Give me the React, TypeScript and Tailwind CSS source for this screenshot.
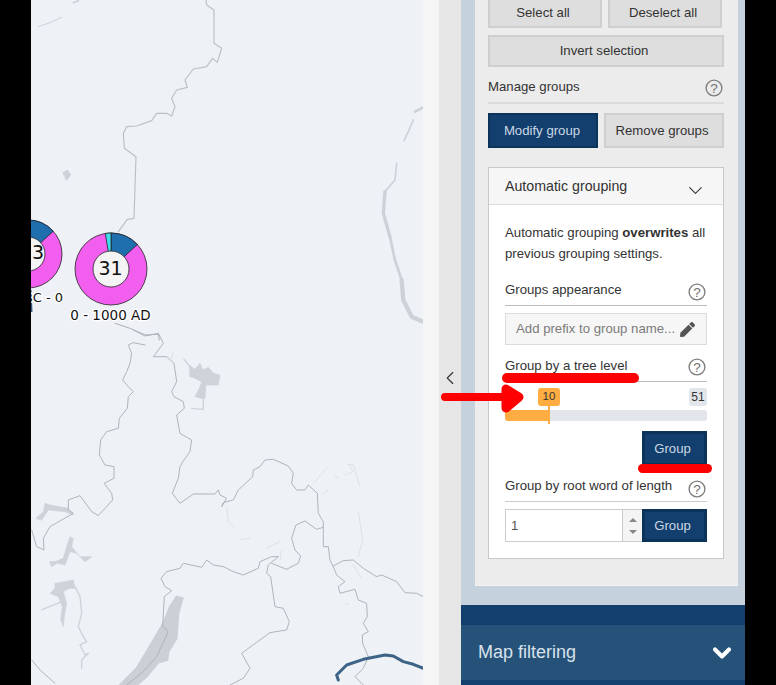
import React from "react";
import { ChevronDown, ChevronLeft } from "lucide-react";
import { FaPen } from "react-icons/fa";

// map lines are in 3x coordinates, the group below scales them down
const borders = [
  "M310,0 L345,18 L385,10 L400,40 L385,60 L370,80 L410,80 L432,100 L440,155 L425,185 L432,200 L460,215 L463,235 L440,255 L447,295 L450,310 L485,330 L480,365 L462,390 L450,410 L445,445 L427,490 L450,520 L490,492 L555,492 L565,480 L570,495 L590,505 L575,530 L580,518 L610,510 L625,480 L668,440 L670,420 L690,410 L705,390 L730,388 L775,408 L790,430 L785,460 L800,480 L825,480 L835,465 L862,490 L865,550 L880,575 L880,650 L895,650 L900,690 L912,715 L920,735 L945,755 L925,770 L930,790 L975,778 L985,810 L1010,820 L1012,860 L1000,880 L1015,905 L997,915 L998,940 L1015,980",
  "M345,45 L310,38 L295,45 L305,70 L300,100 L290,125 L278,150 L295,170 L310,185 L295,200 L292,235 L268,265 L265,295 L230,305 L212,330 L208,375 L225,405 L252,410 L252,445 L222,460 L245,490 L248,510 L225,535 L205,557 L185,545 L150,497 L115,510 L115,540 L130,550 L60,590 L40,625 L42,660 L20,650 L5,600",
  "M745,680 L725,680 L690,695 L685,715 L640,735 L610,725 L580,710 L550,705 L530,690 L515,712 L460,700 L450,715 L410,725 L393,745 L405,770 L425,782 L403,800 L398,890 L415,905 L380,980 L340,1025 L290,1065",
  "M725,700 L770,718 L805,700 L812,678 L795,660 L785,625 L798,585 L825,573 L860,598 L880,592",
  "M745,680 L715,705 L710,730 L722,740 L735,830 L760,835 L778,875 L770,900 L720,908 L635,970 L660,1015 L640,1045 L600,1065",
  "M910,708 L940,692 L970,690 L1000,715 L1040,740 L1055,735 L1100,755 L1125,788 L1160,790 L1180,800",
  "M5,990 L30,1020 L75,1060",
  "M1015,980 L1000,1015 L975,1040 L1000,1065",
];

const lakes = [
  "M478,105 L495,118 L510,100 L518,120 L535,112 L550,130 L570,135 L565,165 L545,165 L528,165 L525,205 L512,205 L495,200 L508,175 L515,155 L495,145 L480,140 Z",
  "M75,760 L105,755 L130,750 L135,775 L118,775 L100,785 L110,820 L103,860 L100,890 L92,870 L97,830 L85,800 L60,790 L75,775 Z",
  "M18,565 L40,545 L45,520 L60,525 L115,535 L130,555 L105,545 L55,540 L35,570 Z",
  "M60,695 L75,695 L100,685 L110,650 L120,620 L130,625 L125,650 L150,680 L185,680 L165,695 L140,670 L120,665 L105,705 L80,700 L65,710 Z",
];

const thinRivers = [
  "M520,205 L520,238 L485,235",
  "M462,88 L480,110",
  "M35,840 L95,815",
  "M135,770 L150,800 L155,850 L145,890 L160,920 L170,935 L150,945 L165,975 L175,970 L155,990 L155,1015",
];

const faintRivers = [
  "M430,65 L425,85",
  "M590,530 L595,575 L615,595",
  "M632,628 L660,625",
  "M710,655 L750,635",
  "M755,660 L750,690",
  "M850,460 L890,415",
  "M880,490 L895,480",
  "M915,435 L925,445",
  "M945,435 L970,425 L955,403 L970,405 L990,470",
  "M985,545 L998,630 L985,680",
  "M970,705 L995,745",
  "M945,825 L955,820",
];

const upperRivers: [number, string][] = [
  [3, "M25,80 L60,68 L95,52"],
  [5, "M130,8 L145,2"],
  [8, "M1155,335 L1180,322"],
  [5, "M1150,360 L1135,395 L1122,422"],
  [5, "M1100,490 L1095,540 L1065,575"],
  [10, "M1065,575 L1060,640 L1080,710"],
  [8, "M1080,710 L1095,780 L1115,840"],
  [13, "M1115,840 L1120,900 L1145,950 L1180,965"],
];

const HelpIcon = () => (
  <svg viewBox="0 0 18 18" className="h-[18px] w-[18px] shrink-0">
    <circle cx="9" cy="9" r="7.9" fill="none" stroke="#808080" strokeWidth="1.4" />
    <text x="9" y="13.6" textAnchor="middle" fontSize="13.5" fontFamily="Liberation Sans" fill="#707070">
      ?
    </text>
  </svg>
);

const SectionTitle = ({ label, className }: { label: string; className: string }) => (
  <div className={`flex items-end justify-between ${className}`}>
    <span>{label}</span>
    <HelpIcon />
  </div>
);

const polar = (cx: number, cy: number, r: number, deg: number) => {
  const a = ((deg - 90) * Math.PI) / 180;
  return `${cx + r * Math.cos(a)},${cy + r * Math.sin(a)}`;
};

const slice = (cx: number, cy: number, r: number, from: number, to: number, fill: string) => (
  <path
    d={`M${cx},${cy} L${polar(cx, cy, r, from)} A${r},${r} 0 ${to - from > 180 ? 1 : 0} 1 ${polar(cx, cy, r, to)} Z`}
    fill={fill}
    stroke="#222"
    strokeWidth="0.8"
  />
);

const MapView = () => (
  <svg viewBox="31 0 392 685" className="h-full w-[392px] bg-[#eef1f6]">
    <g transform="translate(30,330) scale(0.3333)" fill="none" strokeLinejoin="round" strokeLinecap="round">
      {lakes.map((d) => (
        <path key={d} d={d} fill="#ced3d9" stroke="#ced3d9" strokeWidth="2" />
      ))}
      {thinRivers.map((d) => (
        <path key={d} d={d} stroke="#ced3d9" strokeWidth="4" />
      ))}
      {faintRivers.map((d) => (
        <path key={d} d={d} stroke="#dde1e6" strokeWidth="3" />
      ))}
      <path
        d="M440,800 L458,805 L445,850 L440,925 L415,965 L412,990 L385,998 L350,1040 L320,1065 L270,1065 L320,1015 L350,965 L400,880 L420,830 Z"
        fill="#ccd0d6"
        stroke="#ccd0d6"
        strokeWidth="6"
      />
      {borders.map((d) => (
        <path key={d} d={d} stroke="#aab0b6" strokeWidth="2.8" />
      ))}
      <path
        d="M925,1050 L920,1035 L950,1005 L1000,988 L1065,975 L1090,978 L1120,995 L1150,1003 L1180,1015"
        stroke="#3d6486"
        strokeWidth="9"
      />
    </g>
    <g transform="translate(30,0) scale(0.3333)" fill="none" strokeLinejoin="round" strokeLinecap="round">
      <path
        d="M528,0 L530,15 L552,30 L552,130 L575,145 L562,187 L548,175 L530,200 L490,207 L465,240 L472,262 L440,270 L425,295 L435,320 L425,348 L410,340 L380,340 L365,362 L320,378 L290,380 L280,400 L283,445 L318,470 L312,655 L292,658 L265,695"
        stroke="#bcc0c5"
        strokeWidth="3.5"
      />
      {upperRivers.map(([w, d]) => (
        <path key={d} d={d} stroke="#cdd2d8" strokeWidth={w} />
      ))}
      <path d="M100,518 L112,510 L122,525 L110,540 Z" fill="#cdd2d8" stroke="#cdd2d8" strokeWidth="3" />
      <path d="M255,970 L300,985 L345,1005 L385,1003 L388,1020" stroke="#aab0b6" strokeWidth="3" />
    </g>

    {/* second pie, cut by the black edge */}
    <path d="M30,290 L31,312" stroke="#2c5b84" strokeWidth="3" />
    <circle cx="28" cy="254" r="34" fill="#f25fee" stroke="#222" strokeWidth="0.8" />
    {slice(28, 254, 34, 0, 48, "#1f6fae")}
    <circle cx="28" cy="254" r="17" fill="#f4f4f4" stroke="#222" strokeWidth="0.8" />
    <text x="38" y="259" textAnchor="middle" fontSize="19" fontFamily="DejaVu Sans" fill="#111">
      3
    </text>
    <text
      x="63"
      y="302"
      textAnchor="end"
      fontSize="13"
      fontFamily="DejaVu Sans"
      fill="#111"
      stroke="#fff"
      strokeWidth="2.5"
      paintOrder="stroke"
    >
      BC - 0
    </text>

    {/* main pie */}
    <circle cx="111" cy="269" r="36" fill="#f25fee" stroke="#222" strokeWidth="0.8" />
    {slice(111, 269, 36, 0, 47, "#1f6fae")}
    {slice(111, 269, 36, -9, 0, "#3fdfee")}
    <circle cx="111" cy="269" r="18" fill="#f4f4f4" stroke="#222" strokeWidth="0.8" />
    <text x="110.5" y="275" textAnchor="middle" fontSize="19" fontFamily="DejaVu Sans" fill="#111">
      31
    </text>
    <text
      x="110.5"
      y="320"
      textAnchor="middle"
      fontSize="13.5"
      fontFamily="DejaVu Sans"
      fill="#111"
      stroke="#fff"
      strokeWidth="2.5"
      paintOrder="stroke"
    >
      0 - 1000 AD
    </text>
  </svg>
);

const GroupButton = ({ className }: { className: string }) => (
  <button className={`bg-[#123f6d] border-[3px] border-[#0c3359] pr-[4px] text-[13.2px] text-[#ccd8e4] ${className}`}>
    Group
  </button>
);

const grayBtn = "bg-[#dedede] border-2 border-[#cfcfcf] pr-[4px] text-[13.2px] text-[#333] flex items-center justify-center";

const Panel = () => (
  <div className="flex h-full w-[284px] flex-col bg-[#c5d1dd]">
    <div className="mx-[14px] h-[586px] w-[263px] border-b border-[#f4f4f4] bg-[#ececec] pl-[13px] text-[13.2px] text-[#333]">
      <div className="flex w-[234px] gap-[6px]">
        <div className={`h-[28px] w-[114px] border-t-0 ${grayBtn}`}>Select all</div>
        <div className={`h-[28px] w-[114px] border-t-0 ${grayBtn}`}>Deselect all</div>
      </div>
      <div className={`mt-[7px] h-[32px] w-[236px] ${grayBtn}`}>Invert selection</div>

      <SectionTitle label="Manage groups" className="mt-[12px] h-[22px] w-[236px] pr-[1px] leading-[18px] [&>span]:mb-[5px] [&>svg]:mb-[4px]" />
      <div className="mt-[1px] h-[2px] w-[236px] bg-[#dcdcdc]" />
      <div className="mt-[9px] flex w-[236px] gap-[6px]">
        <button className="h-[35px] w-[110px] border-2 border-[#0c3359] bg-[#123f6d] pr-[2px] text-[13.2px] text-[#ccd8e4]">
          Modify group
        </button>
        <div className={`h-[35px] w-[120px] ${grayBtn}`}>Remove groups</div>
      </div>

      {/* Automatic grouping card */}
      <div className="mt-[19px] h-[392px] w-[236px] border border-[#c8c8c8] bg-white">
        <div className="flex h-[37px] items-center justify-between border-b border-[#dcdcdc] bg-[#f6f6f6] pr-[16px] pl-[16px] text-[14.2px]">
          <span className="pt-[2px]">Automatic grouping</span>
          <ChevronDown size={23} strokeWidth={1.1} className="mt-[8px] text-[#333]" />
        </div>
        <div className="px-[16px]">
          <p className="mt-[17px] leading-[21px]">
            Automatic grouping <b>overwrites</b> all previous grouping settings.
          </p>

          <SectionTitle label="Groups appearance" className="mt-[20px] h-[22px] border-b border-[#bbb] pr-[1px] [&>span]:mb-[5px] [&>svg]:mb-[4px]" />
          <div className="mt-[7px] flex h-[32px] items-center justify-between border border-[#dcdcdc] bg-[#f6f6f6] pr-[11px] pl-[10px] text-[#7b7b7b]">
            <span>Add prefix to group name...</span>
            <FaPen size={15} className="text-[#555]" />
          </div>

          <SectionTitle label="Group by a tree level" className="mt-[9px] h-[28px] border-b border-[#bbb] pr-[1px] [&>span]:mb-[5px] [&>svg]:mb-[5px]" />

          {/* slider */}
          <div className="relative h-[45px]">
            <span className="absolute top-[6px] left-[33px] flex h-[18px] w-[22px] items-center justify-center rounded-[3px] bg-[#ffad42] text-[11.5px] text-[#333]">
              10
            </span>
            <span className="absolute top-[6px] right-0 flex h-[18px] w-[18px] items-center justify-center rounded-[3px] bg-[#e2e5ea] text-[12px] text-[#333]">
              51
            </span>
            <div className="absolute top-[28px] right-0 left-0 h-[11px] rounded-[3px] bg-[#e2e5ea]">
              <div className="h-full w-[44px] rounded-l-[3px] bg-[#ffad42]" />
            </div>
            <div className="absolute top-[24px] left-[43px] h-[18px] w-[2px] bg-[#ffad42]" />
          </div>

          <div className="mt-[4px] flex justify-end">
            <GroupButton className="h-[35px] w-[65px]" />
          </div>

          <SectionTitle label="Group by root word of length" className="mt-[9px] h-[27px] border-b border-[#ccc] pr-[1px] [&>span]:mb-[5px] [&>svg]:mb-[3px]" />
          <div className="mt-[7px] flex h-[33px]">
            <div className="flex w-[117px] items-center border border-r-0 border-[#ccc] pl-[5px] text-[#555]">1</div>
            <div className="flex w-[20px] flex-col items-center justify-center gap-[8px] border-y border-l border-[#ccc] bg-[#f4f4f4]">
              <span className="h-0 w-0 border-x-[4px] border-b-[4px] border-x-transparent border-b-[#888]" />
              <span className="h-0 w-0 border-x-[4px] border-t-[4px] border-x-transparent border-t-[#888]" />
            </div>
            <GroupButton className="w-[65px]" />
          </div>
        </div>
      </div>
    </div>

    <div className="mt-[19px] flex-1 bg-[#123f6d] pt-[20px]">
      <div className="flex h-[55px] items-center justify-between bg-[#26527a] pr-[9px] pl-[17px] text-[18px] text-[#d8e1ea]">
        <span>Map filtering</span>
        <ChevronDown size={28} strokeWidth={3.5} className="text-white" />
      </div>
    </div>
  </div>
);

export default function App() {
  return (
    <div className="relative flex h-[685px] w-[776px] overflow-hidden bg-black font-['Liberation_Sans',Arial,sans-serif]">
      <div className="ml-[31px] h-full">
        <MapView />
      </div>
      <div className="h-full w-[16px] bg-[#f5f5f5]" />
      <div className="flex h-full w-[22px] items-center justify-center bg-[#e6e6e6] pt-[71px]">
        <ChevronLeft size={28} strokeWidth={1.2} className="text-[#333]" />
      </div>
      <Panel />

      {/* red marks drawn over the screenshot */}
      <div className="absolute top-[373px] left-[502px] h-[10px] w-[137px] rounded-full bg-[#ff0000]" />
      <div className="absolute top-[464px] left-[638px] h-[9px] w-[74px] rounded-full bg-[#ff0000]" />
      <svg viewBox="0 0 84 29" className="absolute top-[384px] left-[441px] h-[29px] w-[84px]">
        <path d="M4,13 H70" fill="none" stroke="#ff0000" strokeWidth="8" strokeLinecap="round" />
        <path d="M65,5 L78,13 L65,24 Z" fill="#ff0000" stroke="#ff0000" strokeWidth="9" strokeLinejoin="round" />
      </svg>
    </div>
  );
}
